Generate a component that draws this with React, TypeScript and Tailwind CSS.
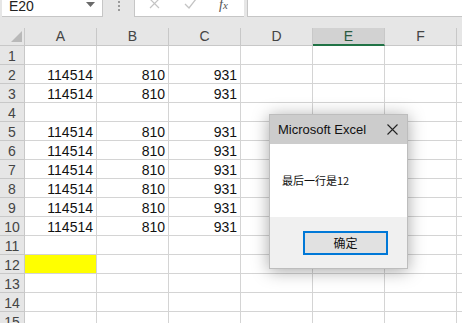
const cols = ["A", "B", "C", "D", "E", "F", "G"];

// row -> [A, B, C]
const data: Record<number, [string, string, string]> = {
  2: ["114514", "810", "931"],
  3: ["114514", "810", "931"],
  5: ["114514", "810", "931"],
  6: ["114514", "810", "931"],
  7: ["114514", "810", "931"],
  8: ["114514", "810", "931"],
  9: ["114514", "810", "931"],
  10: ["114514", "810", "931"],
};

const rows = Array.from({ length: 15 }, (_, i) => i + 1);

function FormulaBar() {
  return (
    <div className="flex h-[28px] items-start bg-[#e6e6e6]">
      {/* 名称框 */}
      <div className="relative ml-[2px] flex h-[17px] w-[101px] items-start overflow-hidden border-b border-r border-[#c6c6c6] bg-white">
        <span className="-mt-[2px] pl-[7px] text-[14px] leading-[16px] text-[#222]">E20</span>
        <svg className="absolute right-[7px] top-[2px]" width="9" height="5" viewBox="0 0 9 5">
          <path d="M0 0 L9 0 L4.5 5 Z" fill="#6a6a6a" />
        </svg>
      </div>
      <div className="flex w-[31px] flex-col items-center gap-[2px] pt-[1px]">
        <span className="h-[2px] w-[2px] bg-[#9a9a9a]" />
        <span className="h-[2px] w-[2px] bg-[#9a9a9a]" />
        <span className="h-[2px] w-[2px] bg-[#9a9a9a]" />
      </div>
      {/* 取消 / 确认 / fx */}
      <div className="flex h-[17px] w-[110px] items-start border-b border-l border-[#c6c6c6] bg-white">
        <svg className="ml-[14px]" width="11" height="9" viewBox="0 0 11 9">
          <path d="M1 -1 L10 8 M10 -1 L1 8" stroke="#c4c4c4" strokeWidth="1.2" />
        </svg>
        <svg className="ml-[24px]" width="13" height="9" viewBox="0 0 13 9">
          <path d="M1 4 L5 8 L12 -1" stroke="#c4c4c4" strokeWidth="1.3" fill="none" />
        </svg>
        <span className="-mt-[2px] ml-[22px] font-['Liberation_Serif',serif] text-[14px] italic leading-[14px] text-[#555]">
          f<span className="text-[11px]">x</span>
        </span>
      </div>
      <div className="ml-[3px] h-[17px] flex-1 border-b border-l border-[#c6c6c6] bg-white" />
    </div>
  );
}

function HeaderRow() {
  return (
    <div className="flex h-[18px] bg-[#e6e6e6]">
      <div className="relative h-full w-[25px] shrink-0 border-b border-r border-[#c8c8c8]">
        <svg className="absolute bottom-[3px] right-[2px]" width="11" height="11" viewBox="0 0 11 11">
          <path d="M11 0 L11 11 L0 11 Z" fill="#b9b9b9" />
        </svg>
      </div>
      {cols.map((c) =>
        c === "E" ? (
          <div
            key={c}
            className="flex h-full w-[72px] shrink-0 items-end justify-center border-b-2 border-r border-b-[#217346] border-r-[#c8c8c8] bg-[#d2d2d2] text-[14px] leading-[14px] text-[#2a5a3e]"
          >
            <span className="mb-[1px]">{c}</span>
          </div>
        ) : (
          <div
            key={c}
            className="flex h-full w-[72px] shrink-0 items-end justify-center border-b border-r border-[#c8c8c8] text-[14px] leading-[14px] text-[#444]"
          >
            <span className="mb-[2px]">{c}</span>
          </div>
        )
      )}
    </div>
  );
}

function Row({ n }: { n: number }) {
  const vals = data[n];
  return (
    <div className="flex h-[19px]">
      <div className="flex h-full w-[25px] shrink-0 items-end justify-center border-b border-r border-[#c8c8c8] bg-[#e6e6e6] text-[14px] leading-[14px] text-[#444]">
        <span className="mb-[1px]">{n}</span>
      </div>
      {cols.map((c, i) => (
        <div
          key={c}
          className={
            "flex h-full w-[72px] shrink-0 items-end justify-end border-b border-r border-[#d4d4d4] pr-[3px] text-[14px] leading-[14px] text-[#111] " +
            (n === 12 && i === 0 ? "bg-[#ffff00]" : "bg-white")
          }
        >
          {vals && i < 3 ? <span className="mb-[1px]">{vals[i]}</span> : null}
        </div>
      ))}
    </div>
  );
}

function MsgBox() {
  return (
    <div className="absolute left-[269px] top-[114px] flex w-[139px] flex-col border border-[#bdbdbd] bg-white shadow-[0_2px_16px_rgba(0,0,0,0.35)]">
      <div className="flex h-[29px] items-center justify-between bg-[#cccccc] pl-[8px] pr-[9px]">
        <span className="text-[13px] text-[#111]">Microsoft Excel</span>
        <svg width="11" height="11" viewBox="0 0 11 11">
          <path d="M0.5 0.5 L10.5 10.5 M10.5 0.5 L0.5 10.5" stroke="#222" strokeWidth="1.1" />
        </svg>
      </div>
      <div className="flex h-[73px] items-center pl-[12px] font-['Noto_Sans_CJK_SC',sans-serif] text-[11px] text-[#111]">
        最后一行是12
      </div>
      <div className="flex h-[51px] justify-end bg-[#f0f0f0] pr-[19px] pt-[14px]">
        <div className="flex h-[24px] w-[85px] items-center justify-center border-2 border-[#0078d7] bg-[#e1e1e1] font-['Noto_Sans_CJK_SC',sans-serif] text-[12px] text-[#111]">
          确定
        </div>
      </div>
    </div>
  );
}

export default function App() {
  return (
    <div className="relative h-[323px] w-[462px] overflow-hidden bg-white font-['Liberation_Sans','Noto_Sans_CJK_SC',sans-serif]">
      <FormulaBar />
      <div className="w-[530px]">
        <HeaderRow />
        {rows.map((n) => (
          <Row key={n} n={n} />
        ))}
      </div>
      <MsgBox />
    </div>
  );
}
